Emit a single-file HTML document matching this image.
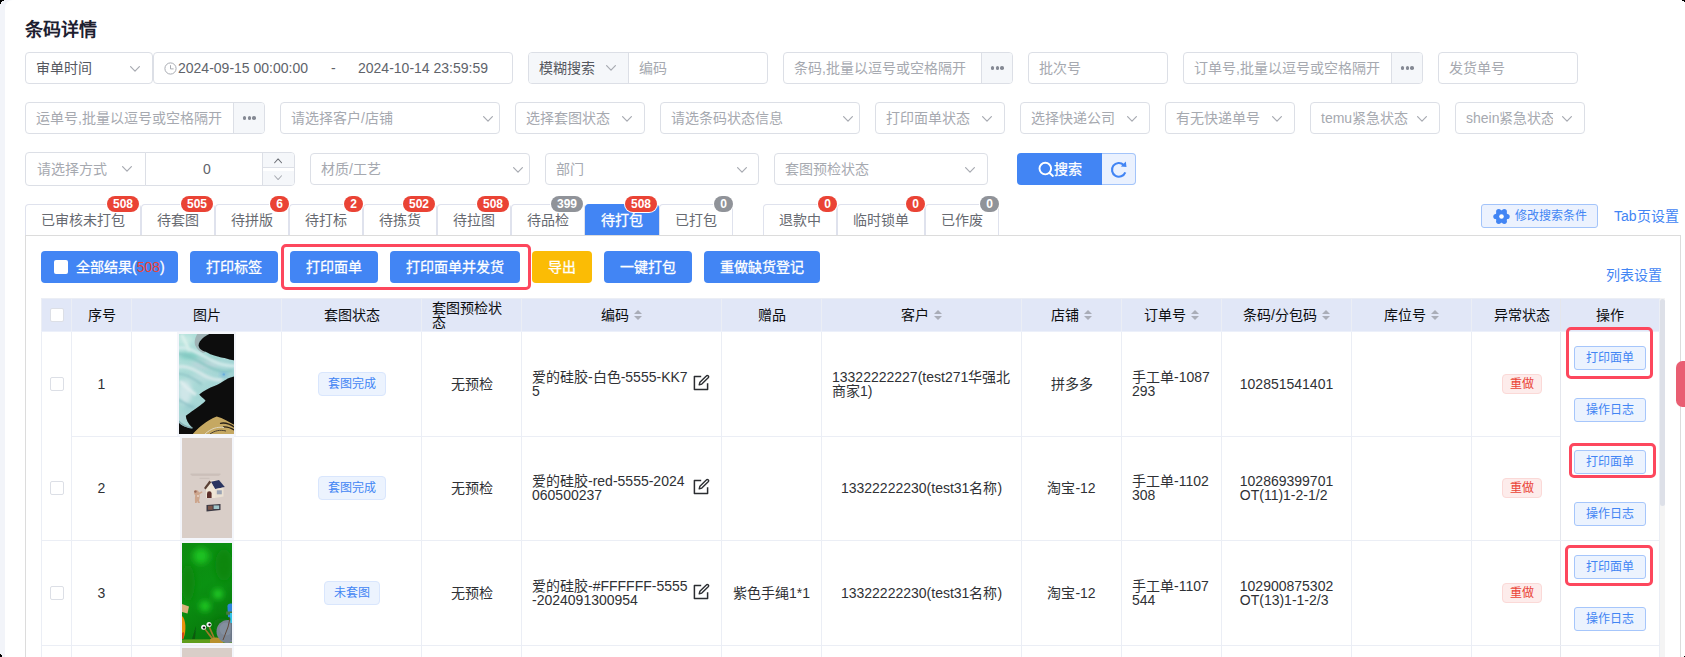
<!DOCTYPE html>
<html lang="zh-CN"><head><meta charset="utf-8"><title>条码详情</title>
<style>
*{box-sizing:border-box;margin:0;padding:0}
html,body{width:1685px;height:657px;overflow:hidden;background:#fff}
body{position:relative;font-family:"Liberation Sans",sans-serif;font-size:14px;color:#606266;-webkit-font-smoothing:antialiased}
.abs{position:absolute}
.strip{position:absolute;left:0;top:0;width:13px;height:657px;background:#f2f4f9}
.page{position:absolute;left:5px;top:0;width:1680px;height:700px;background:#fff;border-top-left-radius:8px}
.title{position:absolute;left:25px;top:17.5px;font-size:18px;font-weight:700;color:#1d2030;line-height:24px;white-space:nowrap}
.inp{position:absolute;height:32px;border:1px solid #dcdfe6;border-radius:4px;background:#fff;font-size:14px;line-height:30px;padding-left:10px;color:#a6a9b0;white-space:nowrap;overflow:hidden}
.inp.dark{color:#55585f}
.inp .chev{position:absolute;top:12px;right:12px}
.addon{position:absolute;top:0;right:0;width:31px;height:30px;background:#f5f7fa;border-left:1px solid #dcdfe6}
.addon i{position:absolute;top:13.3px;width:3.5px;height:3.5px;border-radius:50%;background:#858994}
.pre{position:absolute;left:0;top:0;height:30px;background:#f5f7fa;border-right:1px solid #dcdfe6;padding-left:10px;color:#55585f}

.panel{position:absolute;left:25px;top:235px;width:1656px;height:500px;border:1px solid #dcdcdc;background:#fff}
.tab{position:absolute;top:204px;height:31px;border:1px solid #dfe2ed;border-bottom:none;border-radius:4px 4px 0 0;background:#fff;font-size:14px;line-height:31px;text-align:center;color:#676a71;white-space:nowrap}
.tab.on{background:#4285f4;border-color:#4285f4;color:#fff;-webkit-text-stroke:0.3px #fff}
.bdg{position:absolute;top:196px;height:16px;min-width:18px;border-radius:8px;background:#ea4335;color:#fff;font-size:12px;font-weight:700;line-height:16px;text-align:center;padding:0 5px;box-shadow:0 0 0 1px #fff;white-space:nowrap}
.bdg.g{background:#909399}
.btn{position:absolute;top:251px;height:32px;border-radius:4px;background:#4285f4;color:#fff;font-size:14px;line-height:32px;text-align:center;white-space:nowrap;font-weight:500;-webkit-text-stroke:0.3px #fff}
.lnk{position:absolute;color:#4285f4;font-size:14px;line-height:20px;white-space:nowrap}
.redbox{position:absolute;border:3px solid #fd475d;border-radius:5px}

.th{position:absolute;top:299px;height:32px;font-size:14px;color:#0c0d10;line-height:14px;display:flex;align-items:center;justify-content:center;white-space:nowrap}
.srt{display:inline-block;width:8px;height:10px;margin-left:5px;position:relative;top:0}
.srt:before,.srt:after{content:"";position:absolute;left:0;border:4px solid transparent}
.srt:before{top:-4px;border-bottom-color:#a9adb8}
.srt:after{top:6px;border-top-color:#a9adb8}
.vl{position:absolute;top:298px;width:1px;height:360px;background:#ebeef5}
.hl{position:absolute;height:1px;background:#ebeef5}
.td{position:absolute;font-size:14px;color:#2f3135;line-height:14px;display:flex;align-items:center;white-space:nowrap}
.td.c{justify-content:center;text-align:center}
.cb{position:absolute;width:14px;height:14px;border:1px solid #dcdfe6;border-radius:2px;background:#fff}
.tag{position:absolute;height:24px;border:1px solid #d9e6fd;border-radius:4px;background:#ecf3fe;color:#4285f4;font-size:12px;line-height:22px;text-align:center;white-space:nowrap}
.tag.r{height:20px;line-height:18px;background:#fdeceb;border-color:#fbd9d7;color:#ea4335}
.ob{position:absolute;left:1574px;width:72px;height:24px;border:1px solid #a6c6fb;border-radius:3px;background:#ecf3fe;color:#4285f4;font-size:12px;line-height:22px;text-align:center;white-space:nowrap}
</style></head>
<body>
<div class="strip"></div><div class="page"></div>
<div class="title">条码详情</div>
<div class="inp dark" style="left:25px;top:52px;width:128px;height:32px;line-height:30px">审单时间<svg class="chev" width="10" height="6" viewBox="0 0 10 6" style="right:12px;top:13px"><path d="M0.6 0.6 L5 5.2 L9.4 0.6" fill="none" stroke="#a8abb2" stroke-width="1.2" stroke-linecap="round" stroke-linejoin="round"/></svg></div>
<div class="inp" style="left:153px;top:52px;width:360px;color:#60636a;padding:0"><svg class="abs" style="left:10px;top:9px" width="13" height="13" viewBox="0 0 13 13"><circle cx="6.5" cy="6.5" r="5.6" fill="none" stroke="#a8abb2" stroke-width="1"/><path d="M6.5 3.2 V6.9 H9.6" fill="none" stroke="#a8abb2" stroke-width="1"/></svg><span class="abs" style="left:24px;top:0">2024-09-15 00:00:00</span><span class="abs" style="left:177px;top:0">-</span><span class="abs" style="left:204px;top:0">2024-10-14 23:59:59</span></div>
<div class="inp" style="left:528px;top:52px;width:240px;padding-left:110px">编码<div class="pre" style="width:100px">模糊搜索<svg class="chev" width="10" height="6" viewBox="0 0 10 6" style="right:12px;top:12px"><path d="M0.6 0.6 L5 5.2 L9.4 0.6" fill="none" stroke="#a8abb2" stroke-width="1.2" stroke-linecap="round" stroke-linejoin="round"/></svg></div></div>
<div class="inp" style="left:783px;top:52px;width:230px">条码,批量以逗号或空格隔开<div class="addon"><i style="left:8.8px"></i><i style="left:13.5px"></i><i style="left:18.2px"></i></div></div>
<div class="inp" style="left:1028px;top:52px;width:140px">批次号</div>
<div class="inp" style="left:1183px;top:52px;width:240px">订单号,批量以逗号或空格隔开<div class="addon"><i style="left:8.8px"></i><i style="left:13.5px"></i><i style="left:18.2px"></i></div></div>
<div class="inp" style="left:1438px;top:52px;width:140px">发货单号</div>
<div class="inp" style="left:25px;top:102px;width:240px">运单号,批量以逗号或空格隔开<div class="addon"><i style="left:8.8px"></i><i style="left:13.5px"></i><i style="left:18.2px"></i></div></div>
<div class="inp" style="left:280px;top:102px;width:220px;height:32px;line-height:30px">请选择客户/店铺<svg class="chev" width="10" height="6" viewBox="0 0 10 6" style="right:6px;top:13px"><path d="M0.6 0.6 L5 5.2 L9.4 0.6" fill="none" stroke="#a8abb2" stroke-width="1.2" stroke-linecap="round" stroke-linejoin="round"/></svg></div>
<div class="inp" style="left:515px;top:102px;width:130px;height:32px;line-height:30px">选择套图状态<svg class="chev" width="10" height="6" viewBox="0 0 10 6" style="right:12px;top:13px"><path d="M0.6 0.6 L5 5.2 L9.4 0.6" fill="none" stroke="#a8abb2" stroke-width="1.2" stroke-linecap="round" stroke-linejoin="round"/></svg></div>
<div class="inp" style="left:660px;top:102px;width:200px;height:32px;line-height:30px">请选条码状态信息<svg class="chev" width="10" height="6" viewBox="0 0 10 6" style="right:6px;top:13px"><path d="M0.6 0.6 L5 5.2 L9.4 0.6" fill="none" stroke="#a8abb2" stroke-width="1.2" stroke-linecap="round" stroke-linejoin="round"/></svg></div>
<div class="inp" style="left:875px;top:102px;width:130px;height:32px;line-height:30px">打印面单状态<svg class="chev" width="10" height="6" viewBox="0 0 10 6" style="right:12px;top:13px"><path d="M0.6 0.6 L5 5.2 L9.4 0.6" fill="none" stroke="#a8abb2" stroke-width="1.2" stroke-linecap="round" stroke-linejoin="round"/></svg></div>
<div class="inp" style="left:1020px;top:102px;width:130px;height:32px;line-height:30px">选择快递公司<svg class="chev" width="10" height="6" viewBox="0 0 10 6" style="right:12px;top:13px"><path d="M0.6 0.6 L5 5.2 L9.4 0.6" fill="none" stroke="#a8abb2" stroke-width="1.2" stroke-linecap="round" stroke-linejoin="round"/></svg></div>
<div class="inp" style="left:1165px;top:102px;width:130px;height:32px;line-height:30px">有无快递单号<svg class="chev" width="10" height="6" viewBox="0 0 10 6" style="right:12px;top:13px"><path d="M0.6 0.6 L5 5.2 L9.4 0.6" fill="none" stroke="#a8abb2" stroke-width="1.2" stroke-linecap="round" stroke-linejoin="round"/></svg></div>
<div class="inp" style="left:1310px;top:102px;width:130px;height:32px;line-height:30px">temu紧急状态<svg class="chev" width="10" height="6" viewBox="0 0 10 6" style="right:12px;top:13px"><path d="M0.6 0.6 L5 5.2 L9.4 0.6" fill="none" stroke="#a8abb2" stroke-width="1.2" stroke-linecap="round" stroke-linejoin="round"/></svg></div>
<div class="inp" style="left:1455px;top:102px;width:130px;height:32px;line-height:30px"><span style="display:block;width:87px;overflow:hidden">shein紧急状态</span><svg class="chev" width="10" height="6" viewBox="0 0 10 6" style="right:12px;top:13px"><path d="M0.6 0.6 L5 5.2 L9.4 0.6" fill="none" stroke="#a8abb2" stroke-width="1.2" stroke-linecap="round" stroke-linejoin="round"/></svg></div>
<div class="inp" style="left:25px;top:152px;width:121px;height:34px;line-height:32px;padding-left:11px;border-radius:4px 0 0 4px">请选择方式<svg class="chev" width="10" height="6" viewBox="0 0 10 6" style="right:13px;top:13px"><path d="M0.6 0.6 L5 5.2 L9.4 0.6" fill="none" stroke="#a8abb2" stroke-width="1.2" stroke-linecap="round" stroke-linejoin="round"/></svg></div>
<div class="inp" style="left:145px;top:152px;width:150px;height:34px;line-height:32px;padding:0;border-radius:0 4px 4px 0;color:#60636a"><span class="abs" style="left:57px;top:0">0</span><div class="abs" style="left:116px;top:0;width:1px;height:32px;background:#dcdfe6"></div><div class="abs" style="left:117px;top:0;width:31px;height:15px;background:#f5f7fa;border-bottom:1px solid #dcdfe6"><svg class="abs" style="left:11.3px;top:5px" width="8.2" height="5.5" viewBox="0 0 9 6"><path d="M0.7 5.2 L4.5 1 L8.3 5.2" fill="none" stroke="#6b6e75" stroke-width="1.15" stroke-linecap="round" stroke-linejoin="round"/></svg></div><div class="abs" style="left:117px;top:18px;width:31px;height:14px;background:#f5f7fa"><svg class="abs" style="left:11.3px;top:4px" width="8.2" height="5.5" viewBox="0 0 9 6"><path d="M0.7 0.8 L4.5 5 L8.3 0.8" fill="none" stroke="#a8abb2" stroke-width="1.1" stroke-linecap="round" stroke-linejoin="round"/></svg></div></div>
<div class="inp" style="left:310px;top:153px;width:220px;height:32px;line-height:30px">材质/工艺<svg class="chev" width="10" height="6" viewBox="0 0 10 6" style="right:6px;top:13px"><path d="M0.6 0.6 L5 5.2 L9.4 0.6" fill="none" stroke="#a8abb2" stroke-width="1.2" stroke-linecap="round" stroke-linejoin="round"/></svg></div>
<div class="inp" style="left:545px;top:153px;width:214px;height:32px;line-height:30px">部门<svg class="chev" width="10" height="6" viewBox="0 0 10 6" style="right:11px;top:13px"><path d="M0.6 0.6 L5 5.2 L9.4 0.6" fill="none" stroke="#a8abb2" stroke-width="1.2" stroke-linecap="round" stroke-linejoin="round"/></svg></div>
<div class="inp" style="left:774px;top:153px;width:214px;height:32px;line-height:30px">套图预检状态<svg class="chev" width="10" height="6" viewBox="0 0 10 6" style="right:12px;top:13px"><path d="M0.6 0.6 L5 5.2 L9.4 0.6" fill="none" stroke="#a8abb2" stroke-width="1.2" stroke-linecap="round" stroke-linejoin="round"/></svg></div>
<div class="abs" style="left:1017px;top:153px;width:85px;height:32px;background:#4285f4;border-radius:4px 0 0 4px;color:#fff;line-height:32px;font-weight:500"><svg class="abs" style="left:20px;top:8px" width="18" height="18" viewBox="0 0 18 18"><circle cx="8.3" cy="7.6" r="5.8" fill="none" stroke="#fff" stroke-width="1.9"/><path d="M12.6 11.9 L15.9 14.9" stroke="#fff" stroke-width="2" stroke-linecap="round"/></svg><span class="abs" style="left:37px;top:0;-webkit-text-stroke:0.3px #fff">搜索</span></div>
<div class="abs" style="left:1102px;top:153px;width:34px;height:32px;background:#eaf1fe;border:1px solid #a3c4fa;border-left:none;border-radius:0 4px 4px 0"><svg class="abs" style="left:8px;top:7px" width="18" height="18" viewBox="0 0 18 18"><path d="M15.3 11.4 A6.9 6.9 0 1 1 13.7 3.9" fill="none" stroke="#4285f4" stroke-width="2.1"/><path d="M10.8 5.4 L16.5 6 L15.8 0.5 Z" fill="#4285f4"/></svg></div>
<div class="panel"></div>
<div class="tab" style="left:25px;width:116px">已审核未打包</div>
<div class="tab" style="left:141px;width:74px">待套图</div>
<div class="tab" style="left:215px;width:74px">待拼版</div>
<div class="tab" style="left:289px;width:74px">待打标</div>
<div class="tab" style="left:363px;width:74px">待拣货</div>
<div class="tab" style="left:437px;width:74px">待拉图</div>
<div class="tab" style="left:511px;width:74px">待品检</div>
<div class="tab on" style="left:585px;width:74px">待打包</div>
<div class="tab" style="left:659px;width:74px">已打包</div>
<div class="tab" style="left:763px;width:74px">退款中</div>
<div class="tab" style="left:837px;width:88px">临时锁单</div>
<div class="tab" style="left:925px;width:74px">已作废</div>
<div class="bdg" style="left:107px;width:32px">508</div>
<div class="bdg" style="left:181px;width:32px">505</div>
<div class="bdg" style="left:270.2px;width:18.6px">6</div>
<div class="bdg" style="left:344.2px;width:18.6px">2</div>
<div class="bdg" style="left:403px;width:32px">502</div>
<div class="bdg" style="left:477px;width:32px">508</div>
<div class="bdg g" style="left:551px;width:32px">399</div>
<div class="bdg" style="left:625px;width:32px">508</div>
<div class="bdg g" style="left:714.2px;width:18.6px">0</div>
<div class="bdg" style="left:818.2px;width:18.6px">0</div>
<div class="bdg" style="left:906.2px;width:18.6px">0</div>
<div class="bdg g" style="left:980.2px;width:18.6px">0</div>
<div class="abs" style="left:1481px;top:204px;width:117px;height:24px;border:1px solid #a3c4fa;border-radius:3px;background:#ecf2fe;color:#4285f4;font-size:12px;line-height:22px;white-space:nowrap"><svg class="abs" style="left:11px;top:2.5px" width="17" height="17" viewBox="0 0 17 17"><g fill="#4285f4"><circle cx="14.10" cy="8.50" r="2.6"/><circle cx="11.30" cy="13.35" r="2.6"/><circle cx="5.70" cy="13.35" r="2.6"/><circle cx="2.90" cy="8.50" r="2.6"/><circle cx="5.70" cy="3.65" r="2.6"/><circle cx="11.30" cy="3.65" r="2.6"/><circle cx="8.5" cy="8.5" r="6.2"/></g><circle cx="8.5" cy="8.5" r="2.3" fill="#fff"/></svg><span class="abs" style="left:33px;top:0">修改搜索条件</span></div>
<div class="lnk" style="left:1614px;top:206px">Tab页设置</div>
<div class="lnk" style="left:1606px;top:265px">列表设置</div>
<div class="btn" style="left:41px;width:137px;text-align:left"><span class="abs" style="left:13px;top:9px;width:14px;height:14px;background:#fff;border-radius:2px"></span><span class="abs" style="left:35px;top:0">全部结果(<span style="color:#ea4335;font-weight:400;-webkit-text-stroke:0">508</span>)</span></div>
<div class="btn" style="left:190px;width:88px">打印标签</div>
<div class="btn" style="left:290px;width:88px">打印面单</div>
<div class="btn" style="left:390px;width:130px">打印面单并发货</div>
<div class="btn" style="left:604px;width:88px">一键打包</div>
<div class="btn" style="left:704px;width:116px">重做缺货登记</div>
<div class="btn" style="left:532px;width:60px;background:#fbbc05">导出</div>
<div class="redbox" style="left:280.5px;top:244.3px;width:250.3px;height:46px"></div>
<div class="abs" style="left:41px;top:298px;width:1619px;height:34px;background:#e1e7f7"></div>
<div class="vl" style="left:41px"></div>
<div class="vl" style="left:71px"></div>
<div class="vl" style="left:131px"></div>
<div class="vl" style="left:281px"></div>
<div class="vl" style="left:421px"></div>
<div class="vl" style="left:521px"></div>
<div class="vl" style="left:721px"></div>
<div class="vl" style="left:821px"></div>
<div class="vl" style="left:1021px"></div>
<div class="vl" style="left:1121px"></div>
<div class="vl" style="left:1221px"></div>
<div class="vl" style="left:1351px"></div>
<div class="vl" style="left:1471px"></div>
<div class="vl" style="left:1560px"></div>
<div class="vl" style="left:1659px"></div>
<div class="abs" style="left:1560px;top:298px;width:1px;height:360px;background:#e4e6ec"></div>
<div class="hl" style="left:41px;top:298px;width:1619px"></div>
<div class="hl" style="left:41px;top:331px;width:1619px;background:#ecf0fa"></div>
<div class="hl" style="left:72px;top:436px;width:1488px"></div>
<div class="hl" style="left:41px;top:540px;width:1619px"></div>
<div class="hl" style="left:41px;top:645px;width:1619px"></div>
<div class="th" style="left:72px;width:59px">序号</div>
<div class="th" style="left:132px;width:149px">图片</div>
<div class="th" style="left:282px;width:139px">套图状态</div>
<div class="th" style="left:422px;width:99px;justify-content:flex-start;padding-left:10px;white-space:normal;padding-right:10px">套图预检状态</div>
<div class="th" style="left:522px;width:199px">编码<i class="srt"></i></div>
<div class="th" style="left:722px;width:99px">赠品</div>
<div class="th" style="left:822px;width:199px">客户<i class="srt"></i></div>
<div class="th" style="left:1022px;width:99px">店铺<i class="srt"></i></div>
<div class="th" style="left:1122px;width:99px">订单号<i class="srt"></i></div>
<div class="th" style="left:1222px;width:129px">条码/分包码<i class="srt"></i></div>
<div class="th" style="left:1352px;width:119px">库位号<i class="srt"></i></div>
<div class="th" style="left:1472px;width:100px">异常状态</div>
<div class="th" style="left:1561px;width:98px">操作</div>
<div class="cb" style="left:50px;top:308px"></div>
<div class="cb" style="left:50px;top:377px"></div>
<div class="td c" style="left:72px;top:332px;width:59px;height:104px;padding:0 10px;">1</div>
<svg class="abs" style="left:179px;top:334px;box-shadow:0 0 0 2px #f4f6fb" width="55" height="100" viewBox="0 0 55 100"><defs><linearGradient id="m1" x1="0" y1="0" x2="1" y2="1"><stop offset="0" stop-color="#b4e2dc"/><stop offset=".3" stop-color="#a9dad6"/><stop offset=".6" stop-color="#a6d6d6"/><stop offset="1" stop-color="#8fc6ca"/></linearGradient><filter id="b1" x="-20%" y="-20%" width="140%" height="140%"><feGaussianBlur stdDeviation="0.6"/></filter><filter id="b2" x="-30%" y="-30%" width="160%" height="160%"><feGaussianBlur stdDeviation="2"/></filter><filter id="b6" x="-30%" y="-30%" width="160%" height="160%"><feGaussianBlur stdDeviation="1.1"/></filter><clipPath id="c1"><rect width="55" height="100"/></clipPath></defs><g clip-path="url(#c1)"><rect width="55" height="100" fill="url(#m1)"/><g filter="url(#b2)"><ellipse cx="6" cy="6" rx="8" ry="5" fill="#c4e8e2"/><ellipse cx="10" cy="22" rx="10" ry="3" fill="#7fcdc2"/><ellipse cx="26" cy="31" rx="14" ry="4" fill="#b9d6da"/><ellipse cx="30" cy="24" rx="12" ry="2.5" fill="#9ad2cc"/><ellipse cx="6" cy="58" rx="7" ry="12" fill="#cfe6e8"/><ellipse cx="20" cy="44" rx="12" ry="4" fill="#b6dcdc"/><ellipse cx="12" cy="74" rx="8" ry="4" fill="#9fd0d2"/><ellipse cx="3" cy="84" rx="5" ry="4" fill="#b0d4d8"/></g><g filter="url(#b6)" fill="none" stroke-linecap="round" opacity=".8"><path d="M-1 14 C10 12 20 20 34 27 C42 31 48 32 56 32" stroke="#d9eeee" stroke-width="3.2"/><path d="M-1 20 C8 19 18 27 30 33 C40 38 46 38 52 37" stroke="#86c6c2" stroke-width="2.56"/><path d="M-1 33 C8 31 16 36 26 42 C32 45 38 46 42 46" stroke="#dcebec" stroke-width="3.52"/><path d="M-1 40 C6 39 14 44 22 50" stroke="#8ec4c6" stroke-width="2.4"/><path d="M2 48 C6 52 12 58 16 60" stroke="#e2eff0" stroke-width="3.2"/><path d="M0 66 C4 68 9 72 14 73" stroke="#88bfc4" stroke-width="2.24"/><path d="M3 2 C6 6 8 12 10 16" stroke="#dff2ee" stroke-width="3.2"/></g><ellipse cx="44.6" cy="40.6" rx="3" ry="2" fill="#6fb0dc" filter="url(#b2)"/><circle cx="44.8" cy="40.4" r="1.2" fill="#62a8dc" filter="url(#b1)" opacity=".8"/><path d="M19 -1 C15.5 4 15 9 16.5 12 C18 15.5 21 17.5 24 19 L27 18 C22 16 19 13.5 19.5 11.4 C20 6 26 2 33 -1 Z" fill="#9fb3b5" filter="url(#b1)"/><g filter="url(#b1)"><path d="M32 -1 C26 2 20 6 19.5 11.4 C20 15 24 17 26.6 17.7 C30 19.5 33 21 36 21.7 C40 23 43 23.5 45.6 24 C49 25 52 26 56 26.6 L56 -1 Z" fill="#0e0c0c"/><path d="M56 42.2 C52 43 49 44 47.2 45.4 C43 48 40 50 36 51.7 C30 54 24 57 20.3 60.4 C22 63 26 65 26.6 66.8 C24 70 19 73 15.5 75.5 C12 78 9 80 6.8 81.8 C7 85 9 90 13 93.5 C8 94 3 92 -1 88 L-1 101 L56 101 Z" fill="#0c0a0a"/><path d="M-1 86.5 C3 91 8 93.5 13.5 93.8" fill="none" stroke="#86aeb4" stroke-width="1.8"/><path d="M13 101 C18 95 28 86 37.7 82.6 C44 84 50 88 56 91.3 L56 101 Z" fill="#c5a862"/><path d="M41 89.5 C46 88 51 90 56 93.5 M44 93 C48 92.5 52 94 56 96.5" fill="none" stroke="#2a2118" stroke-width="1.3"/><path d="M26 100 C32 94.5 38 92.5 45 93.5" fill="none" stroke="#ded6c0" stroke-width="1"/><path d="M31 100 C36 96.5 41 95.5 47 97" fill="none" stroke="#4a4030" stroke-width="1"/></g></g></svg>
<div class="tag" style="left:317.5px;top:372px;width:68px">套图完成</div>
<div class="td c" style="left:422px;top:332px;width:99px;height:104px;padding:0 10px;">无预检</div>
<div class="td" style="left:522px;top:332px;width:199px;height:104px;padding:0 10px;"><span>爱的硅胶-白色-5555-KK7<br>5</span><svg width="17" height="17" viewBox="0 0 17 17" style="position:absolute;left:171px;top:50%;margin-top:-10px"><path d="M8.2 2.4 H1.4 V15.6 H14.6 V9.2" fill="none" stroke="#2b2d31" stroke-width="1.5" stroke-linejoin="round"/><path d="M6.2 10.9 L6.9 8.3 L13.3 1.9 A1.2 1.2 0 0 1 15.2 3.7 L8.8 10.1 Z" fill="none" stroke="#2b2d31" stroke-width="1.4" stroke-linejoin="round"/></svg></div>
<div class="td" style="left:822px;top:332px;width:199px;height:104px;padding:0 10px;"><span style="text-align:left">13322222227(test271华强北<br>商家1)</span></div>
<div class="td c" style="left:1022px;top:332px;width:99px;height:104px;padding:0 10px;">拼多多</div>
<div class="td" style="left:1122px;top:332px;width:99px;height:104px;padding:0 10px;"><span>手工单-1087<br>293</span></div>
<div class="td c" style="left:1222px;top:332px;width:129px;height:104px;padding:0 10px;"><span style="text-align:left">102851541401</span></div>
<div class="tag r" style="left:1502px;top:374px;width:40px">重做</div>
<div class="ob" style="top:346px">打印面单</div>
<div class="ob" style="top:398px">操作日志</div>
<div class="cb" style="left:50px;top:481px"></div>
<div class="td c" style="left:72px;top:436px;width:59px;height:104px;padding:0 10px;">2</div>
<svg class="abs" style="left:182px;top:438px;box-shadow:0 0 0 2px #f4f6fb" width="50" height="100" viewBox="0 0 50 100"><defs><filter id="b3" x="-20%" y="-20%" width="140%" height="140%"><feGaussianBlur stdDeviation="0.45"/></filter></defs><rect width="50" height="100" fill="#d9cec8"/><g filter="url(#b3)"><rect x="8.5" y="35.8" width="30" height="0.6" fill="#b5a9a3"/><rect x="9.5" y="37.4" width="28" height="0.5" fill="#c0b4ae"/><rect x="17.5" y="39.9" width="10" height="0.5" fill="#bcb0aa"/><path d="M22 50 L27.5 42.5 L37 42 L42.5 49 L33 51 L29 44.5 L24 50.5 Z" fill="#f1e8d8"/><path d="M29 43.8 L37 42 L42.8 49 L33.2 51.2 Z" fill="#2c3560"/><path d="M24 50 L29 44.5 L33 51 L33 60 L24 60 Z" fill="#efe6d6"/><path d="M33 51 L41.5 49.5 L41.5 58.5 L33 60 Z" fill="#ebe2d3"/><path d="M25 60 L25 55.5 A2.3 2.3 0 0 1 29.6 55.5 L29.6 60 Z" fill="#5b2f2b"/><rect x="34.8" y="52.3" width="5" height="4" fill="#9aa3b4"/><path d="M22 50 L27.5 42.5 L29.2 44.2 L23.6 51.5 Z" fill="#5a4036"/><path d="M12.5 52.5 C14.5 51.5 16.5 52.5 17 54.5 L20 53.2 L20.5 54.5 L17.5 56.3 C18 59 17.5 61 17 62.5 L18 65 L15.8 65 L15.3 63 L14.6 65 L13 65 C13 62 12.6 59.5 13.3 57.5 C11.8 56 11.6 53.5 12.5 52.5 Z" fill="#cda58c"/><circle cx="13.4" cy="53.6" r="1.2" fill="#96675a"/><circle cx="16" cy="58" r="1" fill="#e7d6c8"/><path d="M24.5 67 L38.5 66 L38.5 72 L24.5 73.5 Z" fill="#3c3a44"/><rect x="26" y="67.8" width="4.6" height="4" fill="#7b5548"/><rect x="31.6" y="67.4" width="5.6" height="3.6" fill="#9fc4c8"/></g></svg>
<div class="tag" style="left:317.5px;top:476px;width:68px">套图完成</div>
<div class="td c" style="left:422px;top:436px;width:99px;height:104px;padding:0 10px;">无预检</div>
<div class="td" style="left:522px;top:436px;width:199px;height:104px;padding:0 10px;"><span>爱的硅胶-red-5555-2024<br>060500237</span><svg width="17" height="17" viewBox="0 0 17 17" style="position:absolute;left:171px;top:50%;margin-top:-10px"><path d="M8.2 2.4 H1.4 V15.6 H14.6 V9.2" fill="none" stroke="#2b2d31" stroke-width="1.5" stroke-linejoin="round"/><path d="M6.2 10.9 L6.9 8.3 L13.3 1.9 A1.2 1.2 0 0 1 15.2 3.7 L8.8 10.1 Z" fill="none" stroke="#2b2d31" stroke-width="1.4" stroke-linejoin="round"/></svg></div>
<div class="td c" style="left:822px;top:436px;width:199px;height:104px;padding:0 10px;"><span style="text-align:left">13322222230(test31名称)</span></div>
<div class="td c" style="left:1022px;top:436px;width:99px;height:104px;padding:0 10px;">淘宝-12</div>
<div class="td" style="left:1122px;top:436px;width:99px;height:104px;padding:0 10px;"><span>手工单-1102<br>308</span></div>
<div class="td c" style="left:1222px;top:436px;width:129px;height:104px;padding:0 10px;"><span style="text-align:left">102869399701<br>OT(11)1-2-1/2</span></div>
<div class="tag r" style="left:1502px;top:478px;width:40px">重做</div>
<div class="ob" style="top:450px">打印面单</div>
<div class="ob" style="top:502px">操作日志</div>
<div class="cb" style="left:50px;top:586px"></div>
<div class="td c" style="left:72px;top:541px;width:59px;height:104px;padding:0 10px;">3</div>
<svg class="abs" style="left:182px;top:543px;box-shadow:0 0 0 2px #f4f6fb" width="50" height="100" viewBox="0 0 50 100"><defs><linearGradient id="g3" x1="0" y1="0" x2="0.3" y2="1"><stop offset="0" stop-color="#0c8a10"/><stop offset=".5" stop-color="#0a9212"/><stop offset="1" stop-color="#087a0c"/></linearGradient><filter id="b4" x="-50%" y="-50%" width="200%" height="200%"><feGaussianBlur stdDeviation="3"/></filter><filter id="b5" x="-20%" y="-20%" width="140%" height="140%"><feGaussianBlur stdDeviation="0.5"/></filter><clipPath id="c3"><rect width="50" height="100"/></clipPath></defs><g clip-path="url(#c3)"><rect width="50" height="100" fill="url(#g3)"/><g filter="url(#b4)"><circle cx="19" cy="13" r="8" fill="#1fc324"/><circle cx="36" cy="51" r="4.8" fill="#25d62b"/><circle cx="23" cy="63" r="5.3" fill="#22cf28"/><ellipse cx="42" cy="22" rx="9" ry="16" fill="#09860c"/><ellipse cx="6" cy="40" rx="7" ry="18" fill="#09860c"/><ellipse cx="40" cy="82" rx="9" ry="7" fill="#0a760c"/></g><g filter="url(#b5)"><path d="M0 96.5 L50 96 L50 100 L0 100 Z" fill="#5f9d1c"/><path d="M10 96 L14 83 L13 96 Z" fill="#0b5a10"/><path d="M0 61 L7 63.5 L5.5 70.5 L0 69 Z" fill="#d9b27c"/><path d="M0 73 C4 76 4.5 88 1.5 95.5 L0 96 Z" fill="#ea920e"/><path d="M0 90 L2 89 L1.5 96 L0 96 Z" fill="#d4401a"/><path d="M22 86 C25 90 28 94 30 97 L33.5 97 C32 92 29.5 87 28 83.5 L26.6 84 C28 88 30 92 31.5 95.5 C29 92 26 88.5 23.2 85.4 Z" fill="#a07a2c"/><path d="M28 96.5 C32 93.5 38 94 41 97 L41 100 L28 100 Z" fill="#b8902f"/><circle cx="46" cy="88.5" r="11.5" fill="#7a8594"/><circle cx="44" cy="86" r="6.5" fill="#8893a3" opacity=".7"/><path d="M48.5 73 L46 84 L41 97" fill="none" stroke="#5e4230" stroke-width="0.9"/><path d="M49 80 L50 80 L50 97 L48.5 97 Z" fill="#6a7686"/><path d="M45.5 64 C45 61 48 60 50 60.5 L50 75 L46 74 Z" fill="#2f86da"/><rect x="44.2" y="68.5" width="5.8" height="3.2" fill="#4a7a3e"/><path d="M48 70 L50 70 L50 80 L48.5 80 Z" fill="#33c5e8"/><circle cx="21.6" cy="84.2" r="2.5" fill="#f4f4f4"/><circle cx="27" cy="81.4" r="2.5" fill="#f4f4f4"/><circle cx="22" cy="84.6" r="1.2" fill="#111"/><circle cx="27.6" cy="81.6" r="1.2" fill="#111"/></g></g></svg>
<div class="tag" style="left:323.5px;top:581px;width:56px">未套图</div>
<div class="td c" style="left:422px;top:541px;width:99px;height:104px;padding:0 10px;">无预检</div>
<div class="td" style="left:522px;top:541px;width:199px;height:104px;padding:0 10px;"><span>爱的硅胶-#FFFFFF-5555<br>-2024091300954</span><svg width="17" height="17" viewBox="0 0 17 17" style="position:absolute;left:171px;top:50%;margin-top:-10px"><path d="M8.2 2.4 H1.4 V15.6 H14.6 V9.2" fill="none" stroke="#2b2d31" stroke-width="1.5" stroke-linejoin="round"/><path d="M6.2 10.9 L6.9 8.3 L13.3 1.9 A1.2 1.2 0 0 1 15.2 3.7 L8.8 10.1 Z" fill="none" stroke="#2b2d31" stroke-width="1.4" stroke-linejoin="round"/></svg></div>
<div class="td c" style="left:722px;top:541px;width:99px;height:104px;padding:0 10px;">紫色手绳1*1</div>
<div class="td c" style="left:822px;top:541px;width:199px;height:104px;padding:0 10px;"><span style="text-align:left">13322222230(test31名称)</span></div>
<div class="td c" style="left:1022px;top:541px;width:99px;height:104px;padding:0 10px;">淘宝-12</div>
<div class="td" style="left:1122px;top:541px;width:99px;height:104px;padding:0 10px;"><span>手工单-1107<br>544</span></div>
<div class="td c" style="left:1222px;top:541px;width:129px;height:104px;padding:0 10px;"><span style="text-align:left">102900875302<br>OT(13)1-1-2/3</span></div>
<div class="tag r" style="left:1502px;top:583px;width:40px">重做</div>
<div class="ob" style="top:555px">打印面单</div>
<div class="ob" style="top:607px">操作日志</div>
<div class="abs" style="left:182px;top:648px;width:50px;height:20px;background:#d9cec8;box-shadow:0 0 0 2px #f4f6fb"></div>
<div class="redbox" style="left:1566px;top:327px;width:86.5px;height:52px"></div>
<div class="redbox" style="left:1569px;top:442.5px;width:87px;height:35.5px"></div>
<div class="redbox" style="left:1565px;top:544.7px;width:87.5px;height:41.3px"></div>
<div class="abs" style="left:1660px;top:298px;width:5px;height:360px;background:#f4f4f4"></div>
<div class="abs" style="left:1660px;top:298.5px;width:5px;height:207px;background:#dde0e8;border-radius:2.5px"></div>
<div class="abs" style="left:1676px;top:361px;width:12px;height:46px;background:#e95e72;border-radius:6.5px 0 0 6.5px"></div>
<div class="abs" style="left:0px;top:0px;width:4px;height:1px;background:#000"></div><div class="abs" style="left:0px;top:1px;width:2px;height:1px;background:#000"></div><div class="abs" style="left:0px;top:2px;width:1px;height:2px;background:#000"></div>
<div class="abs" style="left:1682px;top:0px;width:3px;height:1px;background:#000"></div><div class="abs" style="left:1684px;top:1px;width:1px;height:1px;background:#000"></div>
<div class="abs" style="left:0px;top:654px;width:1px;height:3px;background:#000"></div><div class="abs" style="left:1px;top:655px;width:1px;height:2px;background:#000"></div>
<div class="abs" style="left:1684px;top:656px;width:1px;height:1px;background:#000"></div>
</body></html>
